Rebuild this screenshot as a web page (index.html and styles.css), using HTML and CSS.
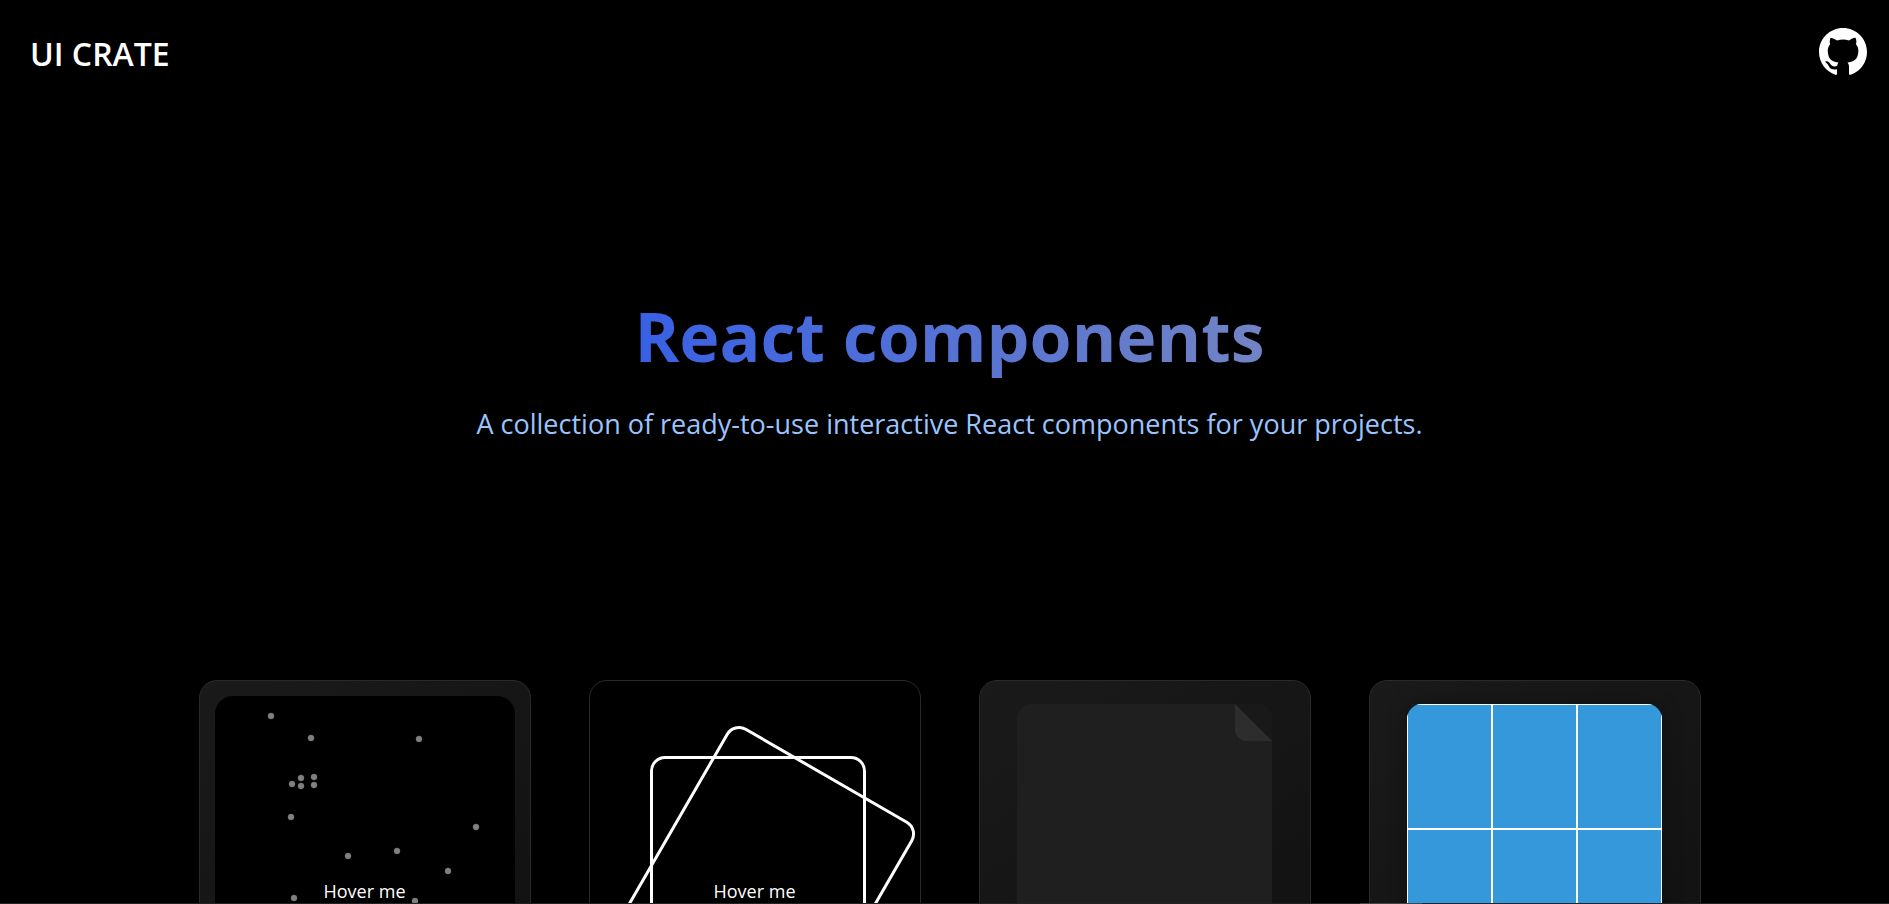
FILE: index.html
```html
<!DOCTYPE html>
<html lang="en">
<head>
<meta charset="utf-8">
<meta name="viewport" content="width=device-width, initial-scale=1">
<title>UI Crate</title>
<link rel="stylesheet" href="styles.css">
</head>
<body>
<header class="site-header">
  <a class="brand" href="#">UI CRATE</a>
  <a class="repo-link" href="#" aria-label="GitHub">
    <svg class="repo-icon" viewBox="0 0 16 16" aria-hidden="true"><path fill="currentColor" d="M8 0C3.58 0 0 3.58 0 8c0 3.54 2.29 6.53 5.47 7.59.4.07.55-.17.55-.38 0-.19-.01-.82-.01-1.49-2.01.37-2.53-.49-2.69-.94-.09-.23-.48-.94-.82-1.13-.28-.15-.68-.52-.01-.53.63-.01 1.08.58 1.23.82.72 1.21 1.87.87 2.33.66.07-.52.28-.87.51-1.07-1.78-.2-3.64-.89-3.64-3.95 0-.87.31-1.59.82-2.15-.08-.2-.36-1.02.08-2.12 0 0 .67-.21 2.2.82.64-.18 1.32-.27 2-.27s1.36.09 2 .27c1.53-1.04 2.2-.82 2.2-.82.44 1.1.16 1.92.08 2.12.51.56.82 1.27.82 2.15 0 3.07-1.87 3.75-3.65 3.95.29.25.54.73.54 1.48 0 1.07-.01 1.93-.01 2.2 0 .21.15.46.55.38A8.01 8.01 0 0 0 16 8c0-4.42-3.58-8-8-8z"/></svg>
  </a>
</header>
<main class="page">
  <section class="hero">
    <h1 class="hero-title">React components</h1>
    <p class="hero-text">A collection of ready-to-use interactive React components for your projects.</p>
  </section>
  <section class="cards">
    <article class="card">
      <div class="particles">
        <svg class="particle-field" viewBox="0 0 300 390" aria-hidden="true">
          <g fill="#808080" stroke="#808080" stroke-opacity="0.4">
            <circle cx="56" cy="20" r="3"/><circle cx="96" cy="42" r="3"/><circle cx="204" cy="43" r="3"/>
            <circle cx="77" cy="88" r="3"/><circle cx="86" cy="82" r="3"/><circle cx="86" cy="90" r="3"/>
            <circle cx="99" cy="81" r="3"/><circle cx="99" cy="89" r="3"/><circle cx="76" cy="121" r="3"/>
            <circle cx="261" cy="131" r="3"/><circle cx="133" cy="160" r="3"/><circle cx="182" cy="155" r="3"/>
            <circle cx="233" cy="175" r="3"/><circle cx="79" cy="202" r="3"/><circle cx="200" cy="205" r="3"/>
          </g>
        </svg>
        <span class="label">Hover me</span>
      </div>
    </article>
    <article class="card card-frames">
      <div class="frames">
        <div class="frame"></div>
        <div class="frame frame-turned"></div>
        <span class="label">Hover me</span>
      </div>
    </article>
    <article class="card card-inset">
      <div class="sheet"><div class="fold"></div></div>
    </article>
    <article class="card card-inset">
      <div class="tiles">
        <div class="tile"></div><div class="tile"></div><div class="tile"></div>
        <div class="tile"></div><div class="tile"></div><div class="tile"></div>
        <div class="tile"></div><div class="tile"></div><div class="tile"></div>
      </div>
    </article>
  </section>
</main>
<div class="scroll-track"><div class="scroll-thumb"></div></div>
</body>
</html>
```
FILE: styles.css
```css
* {
  box-sizing: border-box;
}

body {
  margin: 0;
  height: 100vh;
  overflow: hidden;
  background: #000;
  color: #fff;
  font-family: "Segoe UI", "Open Sans", "Noto Sans", sans-serif;
}

.site-header {
  display: flex;
  justify-content: space-between;
  align-items: center;
  height: 104px;
  padding: 0 22px 0 30px;
}

.brand {
  padding-top: 4px;
  color: inherit;
  font-size: 32px;
  font-weight: 600;
  line-height: 40px;
  text-decoration: none;
}

.repo-link {
  display: flex;
  color: inherit;
}

.repo-icon {
  width: 48px;
  height: 48px;
}

.page {
  padding-left: 10px;
}

.hero {
  padding: 184px 20px 236px;
  text-align: center;
}

.hero-title {
  width: fit-content;
  margin: 0 auto;
  background: linear-gradient(90deg, #3860e4, #7284c4);
  background-clip: text;
  -webkit-background-clip: text;
  color: transparent;
  font-size: 68px;
  font-weight: 700;
  line-height: 96px;
}

.hero-text {
  margin: 20px 0 0;
  color: #99c4ff;
  font-size: 27px;
  line-height: 40px;
}

.cards {
  display: flex;
  justify-content: center;
  gap: 58px;
}

.card {
  display: flex;
  justify-content: center;
  align-items: center;
  flex: none;
  width: 332px;
  height: 422px;
  border: 1px solid #2a2a2a;
  border-radius: 18px;
  background: linear-gradient(145deg, #1a1a1a, #0f0f0f);
}

.card-frames {
  background: #000;
}

.card-inset {
  justify-content: flex-start;
  padding-left: 37px;
}

.particles {
  position: relative;
  display: flex;
  justify-content: center;
  align-items: center;
  width: 300px;
  height: 390px;
  border-radius: 18px;
  background: #000;
}

.particle-field {
  position: absolute;
  inset: 0;
}

.label {
  position: relative;
  font-size: 18px;
  line-height: 28px;
}

.frames {
  position: relative;
  display: flex;
  justify-content: center;
  align-items: center;
  width: 210px;
  height: 270px;
}

.frame {
  position: absolute;
  top: 0;
  left: 0;
  box-sizing: content-box;
  width: 100%;
  height: 100%;
  border: 3px solid #fff;
  border-radius: 15px;
}

.frame-turned {
  transform: rotate(30deg);
}

.sheet {
  display: flex;
  justify-content: flex-end;
  width: 255px;
  height: 375px;
  border-radius: 15px;
  background: #1f1f1f;
  overflow: hidden;
}

.fold {
  width: 37px;
  height: 37px;
  border-bottom-left-radius: 12px;
  background: linear-gradient(45deg, #2d2d2d 49%, #191919 51%);
}

.tiles {
  display: grid;
  grid-template-columns: repeat(3, 1fr);
  grid-template-rows: repeat(3, 125px);
  width: 255px;
  border-radius: 15px;
  box-shadow: 0 0 20px rgba(0, 0, 0, 0.3);
  overflow: hidden;
}

.tile {
  border: 1px solid #fff;
  background: #3498db;
}

.scroll-track {
  position: fixed;
  inset: auto 0 0;
  height: 1px;
  background: #222;
}

.scroll-thumb {
  width: 62px;
  height: 1px;
  margin-left: 72%;
  background: #444;
}
```
